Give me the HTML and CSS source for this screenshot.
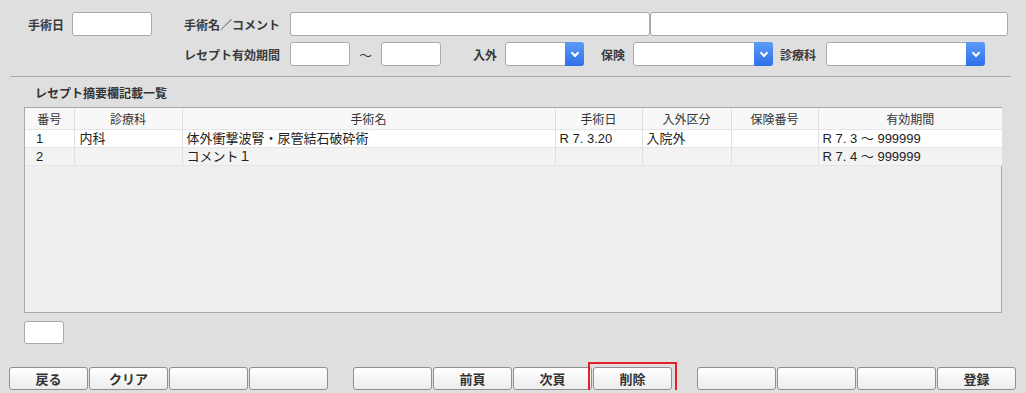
FILE: index.html
```html
<!DOCTYPE html>
<html lang="ja">
<head>
    <meta charset="UTF-8">
    <title>レセプト摘要欄記載</title>
    <link rel="stylesheet" href="styles.css">
</head>
<body>
    <div class="form">
        <div class="row">
            <span class="lbl w64">手術日</span>
            <input class="box w80" type="text">
            <span class="lbl w128">手術名／コメント</span>
            <input class="box w360" type="text">
            <input class="box w358 ml3" type="text">
        </div>
        <div class="row">
            <span class="lbl w280">レセプト有効期間</span>
            <input class="box w60" type="text">
            <span class="tilde">～</span>
            <input class="box w60" type="text">
            <span class="lbl w56">入外</span>
            <div class="sel w79"><span class="arrow"></span></div>
            <span class="lbl w41">保険</span>
            <div class="sel w140"><span class="arrow"></span></div>
            <span class="lbl w43">診療科</span>
            <div class="sel w159"><span class="arrow"></span></div>
        </div>
    </div>

    <div class="sep"></div>

    <h2 class="title">レセプト摘要欄記載一覧</h2>

    <div class="panel">
        <table class="list">
            <colgroup>
                <col style="width:49px"><col style="width:108px"><col style="width:373px">
                <col style="width:87px"><col style="width:89px"><col style="width:87px"><col>
            </colgroup>
            <thead>
                <tr><th>番号</th><th>診療科</th><th>手術名</th><th>手術日</th><th>入外区分</th><th>保険番号</th><th>有効期間</th></tr>
            </thead>
            <tbody>
                <tr class="odd">
                    <td class="num">1</td><td>内科</td><td>体外衝撃波腎・尿管結石破砕術</td><td>R 7. 3.20</td><td>入院外</td><td></td><td>R 7. 3 ～ 999999</td>
                </tr>
                <tr class="even">
                    <td class="num">2</td><td></td><td>コメント１</td><td></td><td></td><td></td><td>R 7. 4 ～ 999999</td>
                </tr>
            </tbody>
        </table>
    </div>

    <input class="box page-no" type="text">

    <div class="buttons">
        <div class="group">
            <button class="btn">戻る</button>
            <button class="btn">クリア</button>
            <button class="btn"></button>
            <button class="btn"></button>
        </div>
        <div class="group">
            <button class="btn"></button>
            <button class="btn">前頁</button>
            <button class="btn">次頁</button>
            <button class="btn marked">削除</button>
        </div>
        <div class="group">
            <button class="btn"></button>
            <button class="btn"></button>
            <button class="btn"></button>
            <button class="btn">登録</button>
        </div>
    </div>
</body>
</html>
```

FILE: styles.css
```css
body {
    margin: 0;
    background-color: #dfdfdf;
    font-family: "Liberation Sans", "Noto Sans CJK JP", sans-serif;
    color: #222;
    font-size: 12px;
}

/* top form */
.form { padding-top: 12px; }
.row { display: flex; align-items: center; height: 24px; margin-bottom: 6px; }
.row:last-child { margin-bottom: 0; }
.lbl { text-align: right; font-weight: bold; color: #3a3a3a; font-size: 12px; margin-right: 8px; flex: none; }
.w64 { width: 64px; }
.w128 { width: 128px; margin-right: 10px; }
.w280 { width: 280px; margin-right: 10px; }
.w56 { width: 56px; }
.w41 { width: 41px; }
.w43 { width: 43px; margin-right: 10px; }
.tilde { width: 31px; text-align: center; font-size: 13px; color: #333; }
.ml3 { margin-left: 3px; }

.box {
    box-sizing: border-box;
    height: 24px;
    border: 1px solid #a9a9a9;
    border-radius: 3px;
    background-color: #fff;
    padding: 0 4px;
    margin: 0;
    flex: none;
}
.w80 { width: 80px; }
.w60 { width: 60px; }
.w360 { width: 360px; }
.w358 { width: 358px; }

.sel {
    box-sizing: border-box;
    height: 24px;
    border: 1px solid #a9a9a9;
    border-radius: 3px;
    background-color: #fff;
    display: flex;
    justify-content: flex-end;
    flex: none;
}
.w79 { width: 79px; }
.w140 { width: 140px; }
.w159 { width: 159px; }
.sel .arrow {
    width: 19px;
    margin: -1px -1px -1px 0;
    border-radius: 0 3px 3px 0;
    background: linear-gradient(#5b9cf8, #2f6fea);
    position: relative;
}
.sel .arrow::after {
    content: "";
    position: absolute;
    left: 7px;
    top: 8px;
    width: 4px;
    height: 4px;
    border-right: 2px solid #fff;
    border-bottom: 2px solid #fff;
    transform: rotate(45deg);
}

.sep { margin: 10px 0 0 10px; width: 1001px; border-top: 1px solid #ababab; }

.title { margin: 9px 0 0 35px; font-size: 12px; line-height: 16px; font-weight: bold; color: #333; }

/* list */
.panel {
    box-sizing: border-box;
    margin: 5px 0 0 24px;
    width: 978px;
    height: 206px;
    border: 1px solid #a9a9a9;
    background-color: #efefef;
}
.list { width: 977px; border-collapse: collapse; table-layout: fixed; }
.list th {
    height: 21px;
    background-color: #f8f8f8;
    font-weight: normal;
    font-size: 12px;
    color: #333;
    border-right: 1px solid #e0e0e0;
    border-bottom: 1px solid #e6e6e6;
    padding: 0;
}
.list td {
    height: 17px;
    line-height: 17px;
    font-size: 13px;
    padding: 0 0 0 4px;
    border-right: 1px solid #e0e0e0;
    border-bottom: 1px solid #e6e6e6;
    white-space: nowrap;
}
.list th:last-child, .list td:last-child { border-right: none; }
.list td.num { padding-left: 11px; }
.list td:nth-child(2) { padding-left: 5px; }
.odd { background-color: #fff; }
.even { background-color: #f3f3f3; }

.page-no { display: block; width: 40px; height: 23px; margin: 8px 0 0 24px; }

/* buttons */
.buttons { display: flex; padding-left: 9px; margin-top: 23px; }
.group { display: flex; gap: 1px; margin-right: 25px; }
.group:last-child { margin-right: 0; }
.btn {
    box-sizing: border-box;
    width: 79px;
    height: 23px;
    border: 1px solid #8f8f8f;
    border-radius: 3px;
    background: linear-gradient(#ffffff, #ececec);
    font-family: "Liberation Sans", "Noto Sans CJK JP", sans-serif;
    font-size: 13px;
    font-weight: bold;
    color: #333;
    padding: 0;
}
.btn.marked { position: relative; }
.btn.marked::after {
    content: "";
    position: absolute;
    top: -6px;
    left: -6px;
    right: -6px;
    bottom: -6px;
    border: 2px solid #e3202b;
}
```
